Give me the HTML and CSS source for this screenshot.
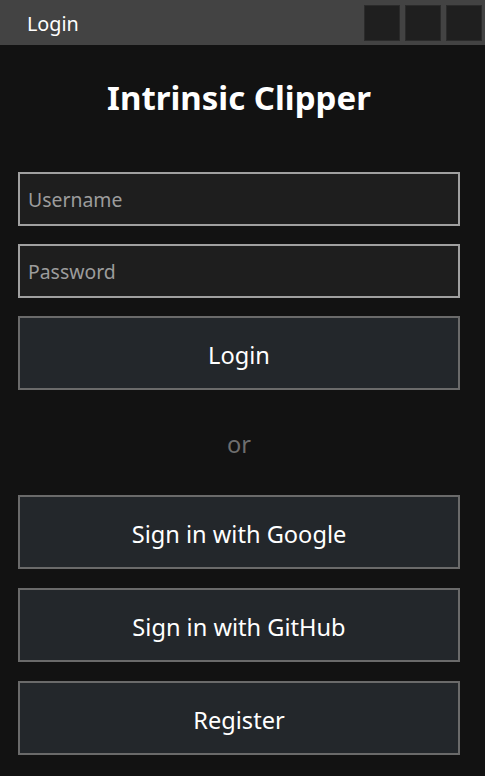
FILE: index.html
```html
<!DOCTYPE html>
<html lang="en">
<head>
<meta charset="UTF-8" />
<meta name="viewport" content="width=device-width, initial-scale=1" />
<title>Login</title>
<link rel="stylesheet" href="styles.css">
</head>
<body>
  <div class="titlebar">
    <span class="titlebar-text">Login</span>
    <div class="win-buttons">
      <div class="win-btn"></div>
      <div class="win-btn"></div>
      <div class="win-btn"></div>
    </div>
  </div>

  <div class="content">
    <h1 class="app-title">Intrinsic Clipper</h1>
    <input class="field" type="text" placeholder="Username" />
    <input class="field" type="password" placeholder="Password" />
    <button class="btn btn-login">Login</button>
    <div class="or">or</div>
    <button class="btn">Sign in with Google</button>
    <button class="btn">Sign in with GitHub</button>
    <button class="btn">Register</button>
  </div>
</body>
</html>
```

FILE: styles.css
```css
body {
  margin: 0; padding: 0;
  background: #121212;
  color: #fff;
  font-family: "Noto Sans", "Open Sans", sans-serif;
}
.titlebar {
  display: flex;
  align-items: center;
  justify-content: space-between;
  height: 45px;
  background: #434343;
  box-sizing: border-box;
  padding: 1px 3px 0 27px;
}
.titlebar-text {
  font-size: 19.8px;
  color: #fff;
}
.win-buttons {
  display: flex;
  gap: 5px;
  margin-top: -1px;
}
.win-btn {
  width: 36px;
  height: 36px;
  box-sizing: border-box;
  background: #1f1f1f;
  border: 1px solid #2b2b2b;
}
.content {
  display: flex;
  flex-direction: column;
  padding: 0 25px 0 18px;
}
.app-title {
  margin: 31px 0 52px;
  text-align: center;
  font-size: 33px;
  font-weight: 700;
  line-height: 44px;
}
.field {
  height: 54px;
  box-sizing: border-box;
  margin: 0 0 18px;
  padding: 1px 8px 0;
  background: #1e1e1e;
  border: 2px solid #a0a0a0;
  color: #fff;
  font-family: inherit;
  font-size: 19.4px;
  outline: none;
}
.field::placeholder {
  color: #9c9c9c;
}
.btn {
  height: 74px;
  box-sizing: border-box;
  margin: 0 0 19px;
  padding: 3px 0 0;
  background: #23272b;
  border: 2px solid #6a6a6a;
  color: #fff;
  font-family: inherit;
  font-size: 23.6px;
  cursor: pointer;
}
.btn:hover {
  background: #2c3136;
}
.btn-login {
  margin-bottom: 0;
}
.or {
  height: 105px;
  padding: 3px 0 0;
  box-sizing: border-box;
  display: flex;
  align-items: center;
  justify-content: center;
  font-size: 23.6px;
  color: #6e6e6e;
}
```
